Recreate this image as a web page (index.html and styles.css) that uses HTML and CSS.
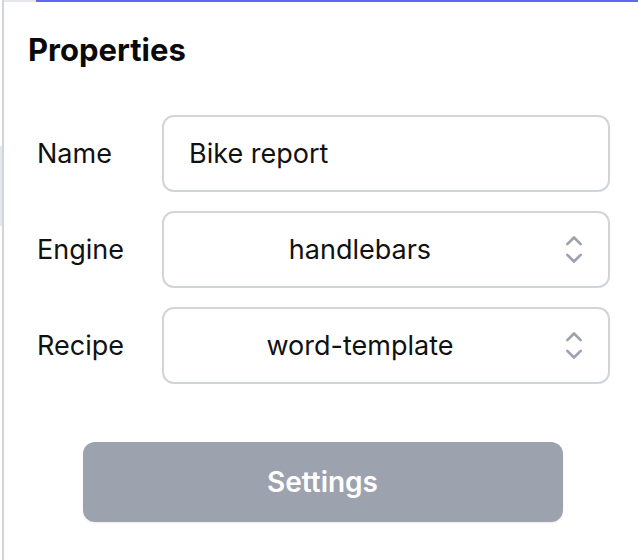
FILE: index.html
```html
<!DOCTYPE html>
<html lang="en">
<head>
<meta charset="utf-8">
<title>Properties</title>
<link rel="stylesheet" href="styles.css">
</head>
<body>
<div class="layout">
  <div class="backdrop">
    <div class="backdrop-block"></div>
  </div>
  <aside class="panel">
    <div class="tabbar">
      <div class="tab-rest"></div>
      <div class="tab-active"></div>
    </div>
    <div class="panel-body">
      <h2 class="title">Properties</h2>
      <form class="form">
        <label class="label" for="name">Name</label>
        <input class="field" id="name" type="text" value="Bike report">
        <label class="label" for="engine">Engine</label>
        <div class="select">
          <span class="select-value" id="engine">handlebars</span>
          <svg class="chevron" viewBox="7.5 4.5 9 15" aria-hidden="true">
            <path d="M8.25 15L12 18.75 15.75 15m-7.5-6L12 5.25 15.75 9" />
          </svg>
        </div>
        <label class="label" for="recipe">Recipe</label>
        <div class="select">
          <span class="select-value" id="recipe">word-template</span>
          <svg class="chevron" viewBox="7.5 4.5 9 15" aria-hidden="true">
            <path d="M8.25 15L12 18.75 15.75 15m-7.5-6L12 5.25 15.75 9" />
          </svg>
        </div>
      </form>
      <div class="actions">
        <button class="btn" type="button">Settings</button>
      </div>
    </div>
  </aside>
</div>
</body>
</html>
```
FILE: styles.css
```css
html, body {
  margin: 0;
  padding: 0;
  height: 100%;
  background: #ffffff;
}

body {
  font-family: Inter, "Noto Sans", "Liberation Sans", sans-serif;
  color: #111111;
}

.layout {
  display: flex;
  height: 560px;
}

.backdrop {
  width: 2px;
  flex: none;
  display: flex;
  flex-direction: column;
  padding-top: 146px;
  box-sizing: border-box;
}

.backdrop-block {
  height: 80px;
  background: #e5e7eb;
}

.panel {
  flex: 1;
  border-left: 2px solid #d1d5db;
  display: flex;
  flex-direction: column;
}

.tabbar {
  display: flex;
  height: 2px;
  flex: none;
}

.tab-rest {
  width: 32px;
  background: #e5e7eb;
}

.tab-active {
  flex: 1;
  background: #6366f1;
}

.panel-body {
  padding: 30px 28px 0 24px;
}

.title {
  margin: 0;
  font-size: 31px;
  line-height: 36px;
  font-weight: 700;
  color: #0a0a0a;
}

.form {
  margin: 47px 0 0 9px;
  display: grid;
  grid-template-columns: 125px 1fr;
  row-gap: 19px;
  align-items: center;
}

.label {
  font-size: 27px;
  color: #111111;
}

.field,
.select {
  box-sizing: border-box;
  height: 77px;
  border: 2px solid #d1d5db;
  border-radius: 12px;
  background: #ffffff;
  font-family: inherit;
  font-size: 27px;
  color: #111111;
}

.field {
  width: 100%;
  padding: 0 25px;
  outline: none;
}

.select {
  display: flex;
  align-items: center;
  padding: 0 26px 0 24px;
}

.select-value {
  flex: 1;
  text-align: center;
  padding-right: 34px;
}

.chevron {
  flex: none;
  width: 16px;
  height: 27px;
  fill: none;
  stroke: #9ca3af;
  stroke-width: 1.5;
  stroke-linecap: round;
  stroke-linejoin: round;
  overflow: visible;
}

.actions {
  display: flex;
  justify-content: center;
  margin-top: 58px;
  padding-left: 7px;
}

.btn {
  width: 480px;
  height: 80px;
  border: none;
  border-radius: 12px;
  background: #9ca3af;
  color: #ffffff;
  font-family: inherit;
  font-size: 28px;
  font-weight: 600;
  box-shadow: 0 1px 2px rgba(0, 0, 0, 0.08);
}
```
